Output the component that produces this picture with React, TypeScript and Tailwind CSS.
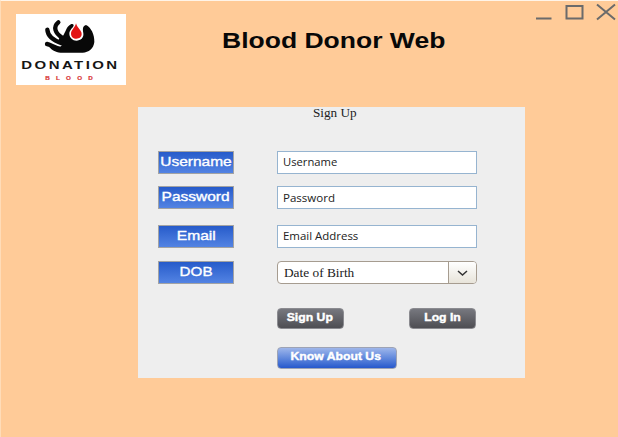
import type { ReactNode } from "react";

function Label({ children, className = "" }: { children: ReactNode; className?: string }) {
  return (
    <div className="flex h-[23px] w-[76px] items-center justify-center border border-[#a3a3a3] bg-linear-to-b from-[#2459c9] to-[#5585e4] bg-origin-border pb-px font-['Liberation_Sans',sans-serif] text-[13px] leading-[20px] text-white [-webkit-text-stroke:0.35px_white]">
      <span className={`block whitespace-nowrap ${className}`}>{children}</span>
    </div>
  );
}

function Field({ children, className = "" }: { children: ReactNode; className?: string }) {
  return (
    <div className="flex h-[23px] w-[200px] items-center border border-[#96b4d0] bg-white pb-px pl-[5px] font-['Open_Sans',sans-serif] text-[11px] leading-[20px] text-[#222]">
      <span className={`block origin-left whitespace-nowrap ${className}`}>{children}</span>
    </div>
  );
}

function DarkButton({ children, className = "" }: { children: ReactNode; className?: string }) {
  return (
    <button className="flex h-[21px] w-[67px] items-center justify-center rounded-[4px] border border-[#8b8b90] bg-linear-to-b from-[#77787f] to-[#4e4e53] pb-[2px] font-['Liberation_Sans',sans-serif] text-[11px] font-bold text-white [-webkit-text-stroke:0.4px_white]">
      <span className={`block whitespace-nowrap ${className}`}>{children}</span>
    </button>
  );
}

function Logo() {
  return (
    <div className="flex h-[71px] w-[110px] flex-col items-center bg-white">
      <svg className="mt-[2px] mr-[2px] h-[42px] w-[56px] shrink-0" viewBox="0 0 168 126" fill="none">
        <g stroke="#080808" strokeWidth="13" strokeLinecap="round">
          <path d="M16 41C17 58 32 73 60 82" />
          <path d="M49 19C33 32 38 52 62 66" />
          <path d="M15 84C28 86 38 98 62 100" />
        </g>
        <path
          d="M52 66C64 64 66 54 72 42C78 28 91 19 95 27C96 34 82 40 82 54C83 66 92 74 103 74C116 74 126 66 124 52C122 40 121 30 132 27C147 34 158 56 157 78C155 98 140 109 122 110H62C46 110 30 104 22 92L52 95L60 88L48 78Z"
          fill="#080808"
        />
        <path d="M102 22C106 37 119 43 119 54C119 63 112 68 103 68C94 68 87 62 87 53C87 42 99 36 102 22Z" fill="#e31414" />
      </svg>
      <div className="mt-[1px] mr-[3px] scale-x-[1.36] pl-[2px] font-['Liberation_Sans',sans-serif] text-[11px] leading-[13px] font-bold tracking-[1.8px] text-[#151515]">
        DONATION
      </div>
      <div className="mt-[3px] mr-[3px] scale-x-[1.25] pl-[5px] font-['Liberation_Sans',sans-serif] text-[5px] leading-[6px] font-bold tracking-[5px] text-[#d93a3a] [-webkit-text-stroke:0.2px_#d93a3a]">
        BLOOD
      </div>
    </div>
  );
}

export default function App() {
  return (
    <div className="flex h-[437px] w-[618px] flex-col overflow-hidden border-t border-l border-t-[#fff4e8] border-l-[#ffdcb8] bg-[#ffcb98]">
      <header className="flex h-[106px] items-start">
        <div className="mt-[13px] ml-[15px]">
          <Logo />
        </div>
        <h1 className="mt-[27px] ml-[96px] w-[223px] origin-left scale-x-[1.205] font-['Liberation_Sans',sans-serif] text-[22px] leading-[26px] font-bold whitespace-nowrap text-[#080808]">
          Blood Donor Web
        </h1>
        <svg className="mt-[2px] ml-[87px] h-[20px] w-[84px] shrink-0" viewBox="0 0 84 20" fill="none" stroke="#6b6b6b" strokeWidth="2">
          <path d="M4 15.500H19.500M34.500 3H50.500V15.500H34.500ZM65 1.500L83 16.500M83 1.500L65 16.500" />
        </svg>
      </header>
      <main className="ml-[137px] flex h-[271px] w-[387px] flex-col bg-[#eeeeee]">
        <h2 className="flex h-[44px] justify-center pl-[7px] font-['Liberation_Serif',serif] text-[12px] leading-[13px] text-[#222]">
          <span className="block scale-x-[1.1]">Sign Up</span>
        </h2>
        <div className="flex">
          <div className="ml-[20px] flex w-[119px] flex-col">
            <Label className="scale-x-[1.19]">Username</Label>
            <div className="mt-[12px]"><Label className="scale-x-[1.19]">Password</Label></div>
            <div className="mt-[16px]"><Label className="scale-x-[1.2]">Email</Label></div>
            <div className="mt-[13px]"><Label className="scale-x-[1.17]">DOB</Label></div>
          </div>
          <div className="flex flex-col">
            <Field className="scale-x-[1.02]">Username</Field>
            <div className="mt-[12px]"><Field className="translate-y-px scale-x-[1.05]">Password</Field></div>
            <div className="mt-[16px]"><Field className="scale-x-[1.04]">Email Address</Field></div>
            <div className="mt-[13px] flex h-[23px] w-[200px] overflow-hidden rounded-[4px] border border-[#a69c90] bg-white">
              <div className="flex w-[170px] items-center pl-[6px] font-['Liberation_Serif',serif] text-[12px] text-[#222]">
                <span className="block origin-left scale-x-[1.11] whitespace-nowrap">Date of Birth</span>
              </div>
              <div className="flex flex-1 items-center justify-center border-l border-[#a69c90] bg-linear-to-b from-white to-[#e8e4da]">
                <svg className="h-[6px] w-[11px]" viewBox="0 0 11 6" fill="none" stroke="#333" strokeWidth="1.5">
                  <path d="M1 1L5.500 5L10 1" />
                </svg>
              </div>
            </div>
          </div>
        </div>
        <div className="mt-[24px] ml-[139px] flex w-[199px] justify-between">
          <DarkButton className="-ml-[2px] scale-x-[1.11]">Sign Up</DarkButton>
          <DarkButton className="scale-x-[1.11]">Log In</DarkButton>
        </div>
        <button className="mt-[18px] ml-[139px] flex h-[22px] w-[120px] items-center justify-center rounded-[4px] border border-[#9da3b5] bg-linear-to-b from-[#9eb6ea] to-[#2658cc] pr-[2px] pb-[3px] font-['Liberation_Sans',sans-serif] text-[11px] font-bold text-white [-webkit-text-stroke:0.4px_white]">
          <span className="block scale-x-[1.11] whitespace-nowrap">Know About Us</span>
        </button>
      </main>
    </div>
  );
}
